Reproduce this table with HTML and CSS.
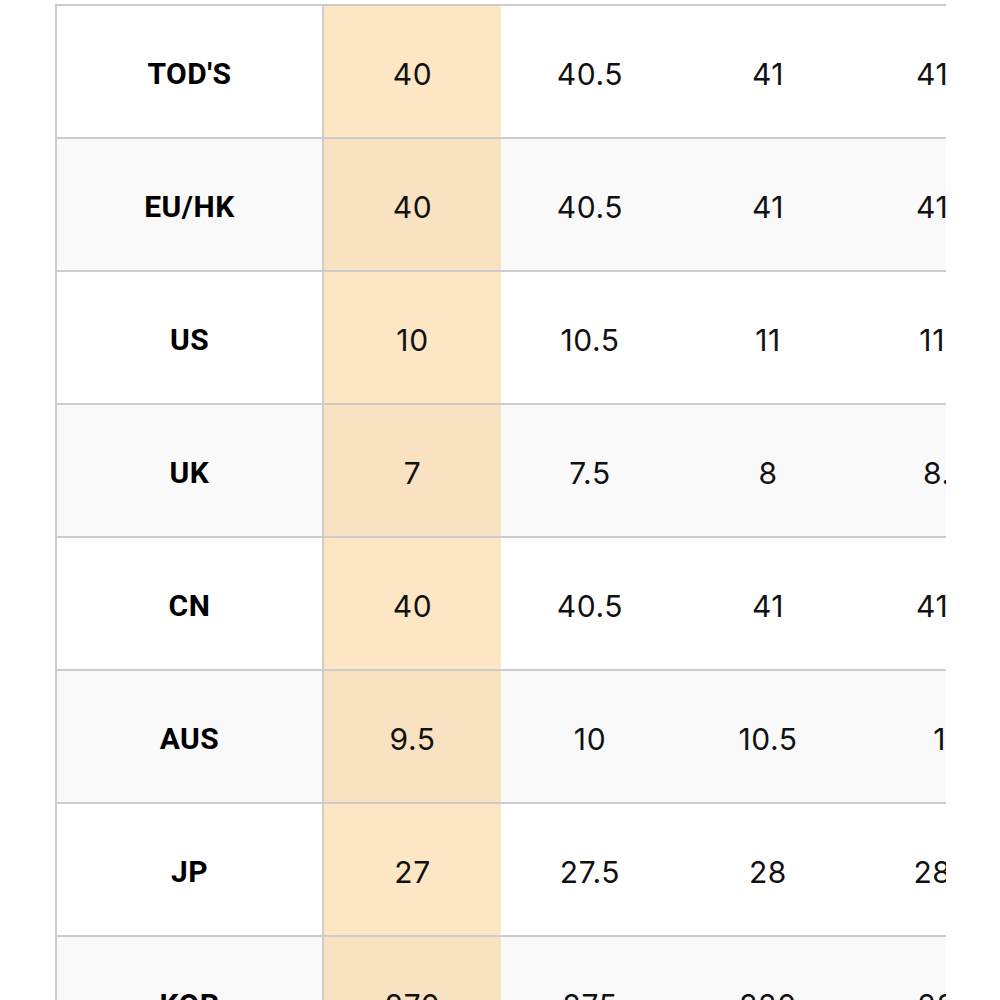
FILE: index.html
```html
<!DOCTYPE html>
<html>
<head>
<meta charset="utf-8">
<link rel="stylesheet" href="styles.css">
</head>
<body>
<div class="scroller">
<table class="sizes">
<colgroup>
<col class="c-label"><col class="c-size"><col class="c-size"><col class="c-size"><col class="c-size"><col class="c-size">
</colgroup>
<tbody>
<tr><th>TOD'S</th><td class="hl">40</td><td>40.5</td><td>41</td><td>41.5</td><td>42</td></tr>
<tr class="alt"><th>EU/HK</th><td class="hl">40</td><td>40.5</td><td>41</td><td>41.5</td><td>42</td></tr>
<tr><th>US</th><td class="hl">10</td><td>10.5</td><td>11</td><td>11.5</td><td>12</td></tr>
<tr class="alt"><th>UK</th><td class="hl">7</td><td>7.5</td><td>8</td><td>8.5</td><td>9</td></tr>
<tr><th>CN</th><td class="hl">40</td><td>40.5</td><td>41</td><td>41.5</td><td>42</td></tr>
<tr class="alt"><th>AUS</th><td class="hl">9.5</td><td>10</td><td>10.5</td><td>11</td><td>11.5</td></tr>
<tr><th>JP</th><td class="hl">27</td><td>27.5</td><td>28</td><td>28.5</td><td>29</td></tr>
<tr class="alt"><th>KOR</th><td class="hl">270</td><td>275</td><td>280</td><td>285</td><td>290</td></tr>
</tbody>
</table>
</div>
</body>
</html>
```

FILE: styles.css
```css
html, body {
  margin: 0;
  padding: 0;
  background: #ffffff;
}
.scroller {
  margin: 4px 0 0 55px;
  width: 891px;
  overflow: hidden;
}
.sizes {
  border-collapse: collapse;
  table-layout: fixed;
  width: 1157px;
  border-left: 2px solid #cccccc;
}
.c-label { width: 267px; }
.c-size { width: 178px; }
.sizes tr {
  height: 133px;
  background: #ffffff;
}
.sizes tr.alt {
  background: #f9f9f9;
}
.sizes th, .sizes td {
  border-top: 2px solid #cccccc;
  border-bottom: 2px solid #cccccc;
  padding: 4px 0 0 0;
  text-align: center;
  vertical-align: middle;
  color: #111111;
  white-space: nowrap;
}
.sizes th {
  font-family: Roboto, "Liberation Sans", sans-serif;
  font-weight: 700;
  font-size: 30px;
  letter-spacing: 0.5px;
  color: #000000;
  border-right: 2px solid #cccccc;
}
.sizes td {
  font-family: Inter, "Noto Sans", sans-serif;
  font-weight: 400;
  font-size: 30px;
  letter-spacing: 0.6px;
}
.sizes td.hl {
  background: #fde6c4;
}
.sizes tr.alt td.hl {
  background: #f8e2c2;
}
```
